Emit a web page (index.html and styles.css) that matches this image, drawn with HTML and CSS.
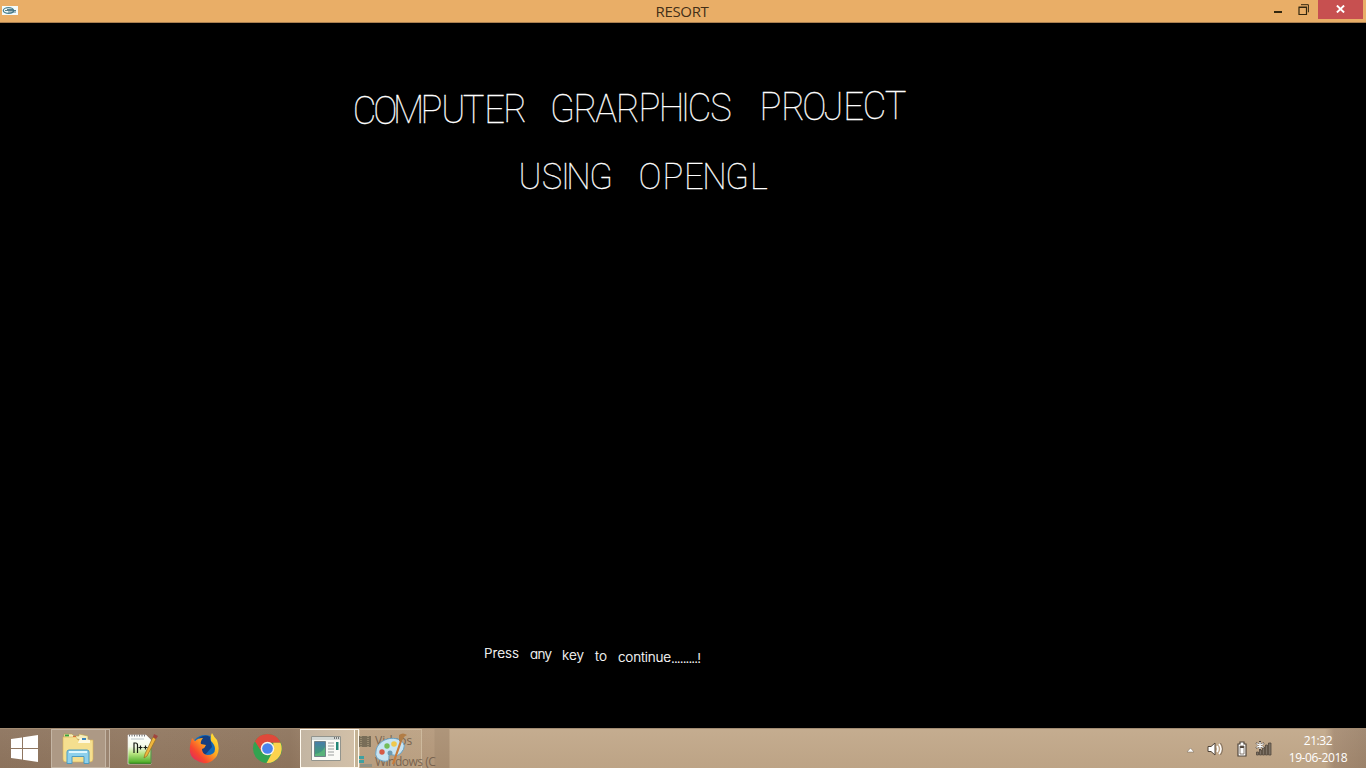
FILE: index.html
```html
<!DOCTYPE html>
<html lang="en">
<head>
<meta charset="utf-8">
<title>RESORT</title>
<link rel="stylesheet" href="styles.css">
</head>
<body>
<div class="desktop">
  <header class="titlebar">
    <svg class="app-icon" viewBox="0 0 16 9"><rect width="16" height="9" fill="#f4fbfb"/><ellipse cx="6.5" cy="4.5" rx="5.2" ry="2.8" fill="none" stroke="#4a8291" stroke-width="1.3"/><path d="M3 4.5h11M5 3.5h6M6 6h8" stroke="#43707f" stroke-width=".9"/></svg>
    <h1 class="title">RESORT</h1>
    <div class="controls">
      <svg class="min" viewBox="0 0 40 22"><path d="M0 12h8" stroke="#33270f" stroke-width="2"/></svg>
      <svg class="restore" viewBox="0 0 12 12"><path d="M1 3.5h7.5V10.500H1zM.5 3h8.500" fill="none" stroke="#33270f" stroke-width="1.2"/><path d="M3 .7h7.400v7.600" fill="none" stroke="#33270f" stroke-width="1"/></svg>
      <div class="close"><svg viewBox="0 0 8 7"><path d="M.8.4l6.400 6.200M7.200.4L.8 6.600" stroke="#fff" stroke-width="1.7"/></svg></div>
    </div>
  </header>
  <main class="canvas">
    <svg class="scene" viewBox="0 23 1366 705">
      <g class="big" transform="scale(.92 1)">
        <text y="124 124 123.500 123.500 123.500 123 123 122.500" x="396.2 419 444 469 492.900 514.700 537.500 560">COMPUTER</text>
        <text y="122 122 122 122 121.500 121.500 121.500 121.500 121.500" x="611.400 636.400 658.700 682.500 705.800 729.900 745.100 760.300 783.700">GRARPHICS</text>
        <text y="120.500 120.500 120.500 120.500 120 119.500 119" x="837.500 862 885.300 906 927.700 950.500 973.400">PROJECT</text>
        <text class="second" y="189" x="576.100 600 614.700 628.800 653.300">USING</text>
        <text class="second" y="189" x="706.500 731.500 754.200 776.600 801.100 824.900">OPENGL</text>
      </g>
      <g class="small">
        <text x="484" y="658" textLength="35">Press</text>
        <text x="530" y="659" textLength="22">any</text>
        <text x="562" y="660" textLength="22">key</text>
        <text x="595" y="661" textLength="12">to</text>
        <text x="618" y="661.500" textLength="53">continue</text>
        <text x="671" y="662.500" textLength="30">.........!</text>
      </g>
    </svg>
  </main>
  <footer class="taskbar">
    <div class="start"><svg viewBox="0 0 27 27"><path d="M0 4l11-1.500V13H0zM12 2.300L27 0v13H12zM0 14h11v10.500L0 23zM12 14h15v13l-15-2.300z" fill="#fff"/></svg></div>
    <div class="task explorer">
      <svg width="32" height="32" viewBox="0 0 32 32"><path d="M2 4V1h8l2 2h5V1l9 2v5z" fill="#f6edb9" stroke="#b99d49" stroke-width=".6"/><path d="M3 1.500h4v2H3z" fill="#39a33b"/><path d="M11 3h3v2h-3z" fill="#d95533"/><path d="M1 4h13l2 3h15v19q0 3-3 3H4q-3 0-3-3z" fill="#f5df8f" stroke="#d9b455" stroke-width=".6"/><path d="M18 5l10 2v3H16z" fill="#fff9df"/><path d="M20 5h4v2h-4z" fill="#3c87bd"/><path d="M5 30.500V19q0-2 2-2h18q2 0 2 2v11.500h-5v-7H10v7z" fill="#8dd0ec" stroke="#4b9bc1"/><path d="M7 19h18" stroke="#dff8ff" stroke-width="2"/></svg>
    </div>
    <div class="stack"></div>
    <svg class="npp" viewBox="0 0 32 32"><defs><linearGradient id="np" x2="0" y2="1"><stop stop-color="#fff"/><stop offset=".4" stop-color="#f3fae6"/><stop offset=".65" stop-color="#b4e37d"/><stop offset="1" stop-color="#3da51b"/></linearGradient></defs><path d="M1 2h18l5 5v24H1z" fill="url(#np)" stroke="#eee" stroke-width=".6"/><path d="M2 2.500h17" stroke="#777" stroke-width="2" stroke-dasharray="1 1.500"/><path d="M4 6h13" stroke="#bcc5c9"/><path d="M2.500 30.300H24V15" fill="none" stroke="#367a22"/><path d="M7 20V10h1.500q2 0 2 2v8M11.500 14.500h4M13.500 12.500v4M16.500 14.500h4M18.500 12.500v4" fill="none" stroke="#171b13" stroke-width="1.200"/><path d="M17 25l1-4L26 4l3 2-9 17z" fill="#f0b73d" stroke="#976d20" stroke-width=".7"/><path d="M26 4l1-3 4 2-2 3z" fill="#a0453f"/></svg>
    <svg class="fox" viewBox="0 0 32 32"><defs><linearGradient id="fx" x1="1" x2="0" y2="1"><stop stop-color="#fff342"/><stop offset=".4" stop-color="#ffab20"/><stop offset=".7" stop-color="#f7482e"/><stop offset="1" stop-color="#d81b72"/></linearGradient></defs><circle cx="16" cy="15" r="13" fill="#126bba"/><path d="M10 5q6-4 11-1l2 10-7 8-8-5z" fill="#153e80"/><path d="M3 5l3 3q3-3 8-3-3 3-2 6l5 1q-1 3-4 4 0 5 5 6 8 0 8-6 0-4-4-8-1-5 1-8 2 4 5 7 5 14-5 21-8 5-16-1C-1 23 0 14 3 5z" fill="url(#fx)"/></svg>
    <svg class="chrome" viewBox="0 0 32 32"><circle cx="16" cy="16" r="15" fill="#32a350"/><path d="M3 8.500A15 15 0 0 1 29 8.500L29.400 10H16l-6 9.500z" fill="#df493b"/><path d="M29.400 10A15 15 0 0 1 15 31l6.500-12L22 10z" fill="#fcd34e"/><circle cx="16" cy="16" r="7" fill="#f8f4eb"/><circle cx="16" cy="16" r="5.500" fill="#4a83ed"/></svg>
    <div class="task active"><svg width="30" height="26" viewBox="0 0 30 26"><defs><linearGradient id="sc" y2="1" x2="0"><stop stop-color="#487caa"/><stop offset="1" stop-color="#3fa36c"/></linearGradient></defs><path d="M.5.5h29v24H.5z" fill="#fbfbf7" stroke="#92948d"/><path d="M1 2.500h28" stroke="#d4d9d6" stroke-width="3"/><path d="M23 2h5" stroke="#555" stroke-width="1.300" stroke-dasharray="1 1"/><path d="M3.500 5.500h11v15h-11z" fill="url(#sc)" stroke="#718389"/><path d="M4 18q7-1 10-7v9H4z" fill="#58b27a"/><path d="M17 7h6M17 10h6M17 13h6M17 16h6M17 19h6" stroke="#9b9f9e"/><path d="M25 6h2.500v8H25z" fill="#248879"/></svg></div>
    <div class="stack active-stack"></div>
    <div class="preview">
      <div class="ghost"><svg width="12" height="13" viewBox="0 0 12 13"><path d="M0 1h12v11H0z" fill="#786d58"/><path d="M2 1v11M9 1v11" stroke="#b9aa88" stroke-dasharray="1 1"/></svg><span>Videos</span></div>
      <div class="ghost drive"><svg width="14" height="12" viewBox="0 0 14 12"><path d="M0 0h5v3H0zM0 4h5v3H0z" fill="#40a0a0"/><path d="M1 8h12v3H1z" fill="#929183"/></svg><span>Windows (C</span></div>
      <svg class="paint" viewBox="0 0 34 34"><path d="M3 19C4 10 16 3 27 8q8 5 1 13-3 4-8 2-5-2-4 3 0 4-6 3Q1 27 3 19z" fill="#c7e4f3" stroke="#6aa2c3"/><circle cx="9" cy="20" r="2.700" fill="#d65a47"/><circle cx="14" cy="14" r="2.700" fill="#73bd58"/><circle cx="21" cy="12" r="2.800" fill="#efc84d"/><circle cx="17" cy="21" r="2.500" fill="#6d9bb2"/><path d="M20 32L28 9" stroke="#c87b3b" stroke-width="2.200"/><path d="M26 9l0-6q4-3 8 0-3 1-4 4l-2 3z" fill="#b17d46"/></svg>
    </div>
    <div class="tray">
      <svg class="arrow" viewBox="0 0 8 6"><path d="M.5 5L4 1l3.500 4z" fill="#fff" stroke="#776858" stroke-width=".5"/></svg>
      <svg class="volume" viewBox="0 0 17 16"><path d="M1 5.500h3L8 2v12l-4-3.500H1z" fill="#fff" stroke="#514538"/><path d="M10 5q2 3 0 6M12 3q4 5 0 10" fill="none" stroke="#fff" stroke-width="1.500"/><path d="M13.500 2q4 6 0 12" fill="none" stroke="#65584a" stroke-width=".7"/></svg>
      <svg class="battery" viewBox="0 0 12 16"><path d="M4 1h4v2h2v12H2V3h2z" fill="#fff" stroke="#51473d" stroke-width="1.200"/><path d="M4 5h4v2H4z" fill="#4b4139"/><path d="M4 5v8h4V5z" fill="none" stroke="#6c6054" stroke-width=".8"/></svg>
      <svg class="signal" viewBox="0 0 16 15"><path d="M1 11h2v3H1zM4 9h2v5H4zM7 6h2v8H7zM10 4h2v10h-2zM13 2h2.500v12H13z" fill="#7d7266" stroke="#50463c" stroke-width=".8"/><path d="M4.500 0v9M.5 2l8 5M.5 7l8-5" stroke="#51473e" stroke-width="2"/><path d="M4.500 1v7M1 2.500l7 4M1 6.500l7-4" stroke="#fff" stroke-width="1.300"/></svg>
      <div class="clock"><span>21:32</span><span>19-06-2018</span></div>
    </div>
  </footer>
</div>
</body>
</html>
```

FILE: styles.css
```css
* { box-sizing: border-box; }
body { margin: 0; background: #000; font-family: "Open Sans", "Noto Sans", sans-serif; overflow: hidden; }
svg { display: block; flex: none; }
.desktop { display: grid; grid-template-rows: 23px 705px 40px; width: 1366px; height: 768px; }
.titlebar { display: grid; grid-template-columns: 120px 1fr 120px; background: #e9ae67; border-bottom: 1px solid #aa7f50; }
.app-icon { width: 16px; height: 9px; margin: 6px 0 0 2px; }
.title { margin: 0; padding-right: 2px; font-size: 15px; line-height: 23px; font-weight: 400; color: #432f17; text-align: center; letter-spacing: -.35px; }
.controls { display: flex; align-items: flex-start; }
.min { width: 40px; height: 22px; margin-left: 28px; margin-right: -16px; }
.restore { width: 12px; height: 12px; margin-top: 4px; }
.close { display: flex; justify-content: center; width: 45px; height: 19px; background: #c75050; margin-left: 8px; flex: none; }
.close svg { width: 9px; height: 8px; margin-top: 5px; }
.canvas, .scene { width: 1366px; height: 705px; }
.big { font-family: Roboto, sans-serif; font-weight: 100; font-size: 39.500px; fill: #fff; stroke: #fff; stroke-width: .25px; text-anchor: middle; }
.second { font-size: 37.500px; }
.small { font-family: Inter, sans-serif; font-size: 13.500px; font-weight: 300; font-feature-settings: "cv11"; fill: #fff; stroke: #fff; stroke-width: .15px; }
.taskbar { display: flex; align-items: center; border-top: 1px solid #a28b72; background: linear-gradient(180deg, rgba(255,255,255,.04), rgba(90,55,25,.05)), linear-gradient(90deg, #8e755f 0, #927962 160px, #8f765f 290px, #9b826a 315px, #b3977a 340px, #b59a7d 434px, #ab9175 435px, #ab9175 449px, #c2a98b 450px, #c2a98b 1325px, #a98f76 1334px, #9e856d 1366px); }
.start { width: 51px; padding-left: 11px; flex: none; }
.start svg { width: 27px; height: 27px; }
.task { height: 39px; width: 55px; display: flex; align-items: center; justify-content: center; border: 1px solid #c4b5a4; background: #ad9985; flex: none; }
.explorer { padding-right: 2px; }
.stack { height: 39px; width: 4px; border: 1px solid #c4b5a4; border-left: 0; background: #9b8571; flex: none; }
.npp { width: 32px; height: 32px; margin-left: 17px; }
.fox { width: 32px; height: 32px; margin-left: 30px; }
.chrome { width: 31px; height: 31px; margin-left: 31px; }
.active { border-color: #fffaf0; margin-left: 17px; padding-right: 4px; background: linear-gradient(90deg, #c3b5a2, #d2c0a8); }
.active-stack { border-color: #fffaf0; background: #c4b294; }
.preview { position: relative; width: 77px; height: 39px; color: #79644f; font-size: 12px; line-height: 20px; }
.preview::before { content: ""; position: absolute; left: 0; top: 0; width: 61px; height: 39px; border: 1px solid #cdb99d; background: rgba(220,198,165,.2); }
.ghost { position: relative; display: flex; align-items: center; gap: 4px; height: 21px; white-space: nowrap; padding: 3px 0 0 0; }
.drive { height: 20px; gap: 2px; padding-top: 3px; letter-spacing: -.5px; }
.paint { position: absolute; left: 14px; top: 3px; width: 34px; height: 34px; }
.tray { display: flex; align-items: center; margin-left: auto; height: 39px; width: 180px; }
.arrow { width: 9px; height: 6px; margin-top: 2px; }
.volume { width: 17px; height: 16px; margin-left: 12px; }
.battery { width: 12px; height: 16px; margin-left: 12px; }
.signal { width: 17px; height: 15px; margin-left: 7px; }
.clock { width: 68px; margin-left: 12px; color: #fff; display: flex; flex-direction: column; align-items: center; font-size: 12px; line-height: 17px; letter-spacing: -.4px; }
```
